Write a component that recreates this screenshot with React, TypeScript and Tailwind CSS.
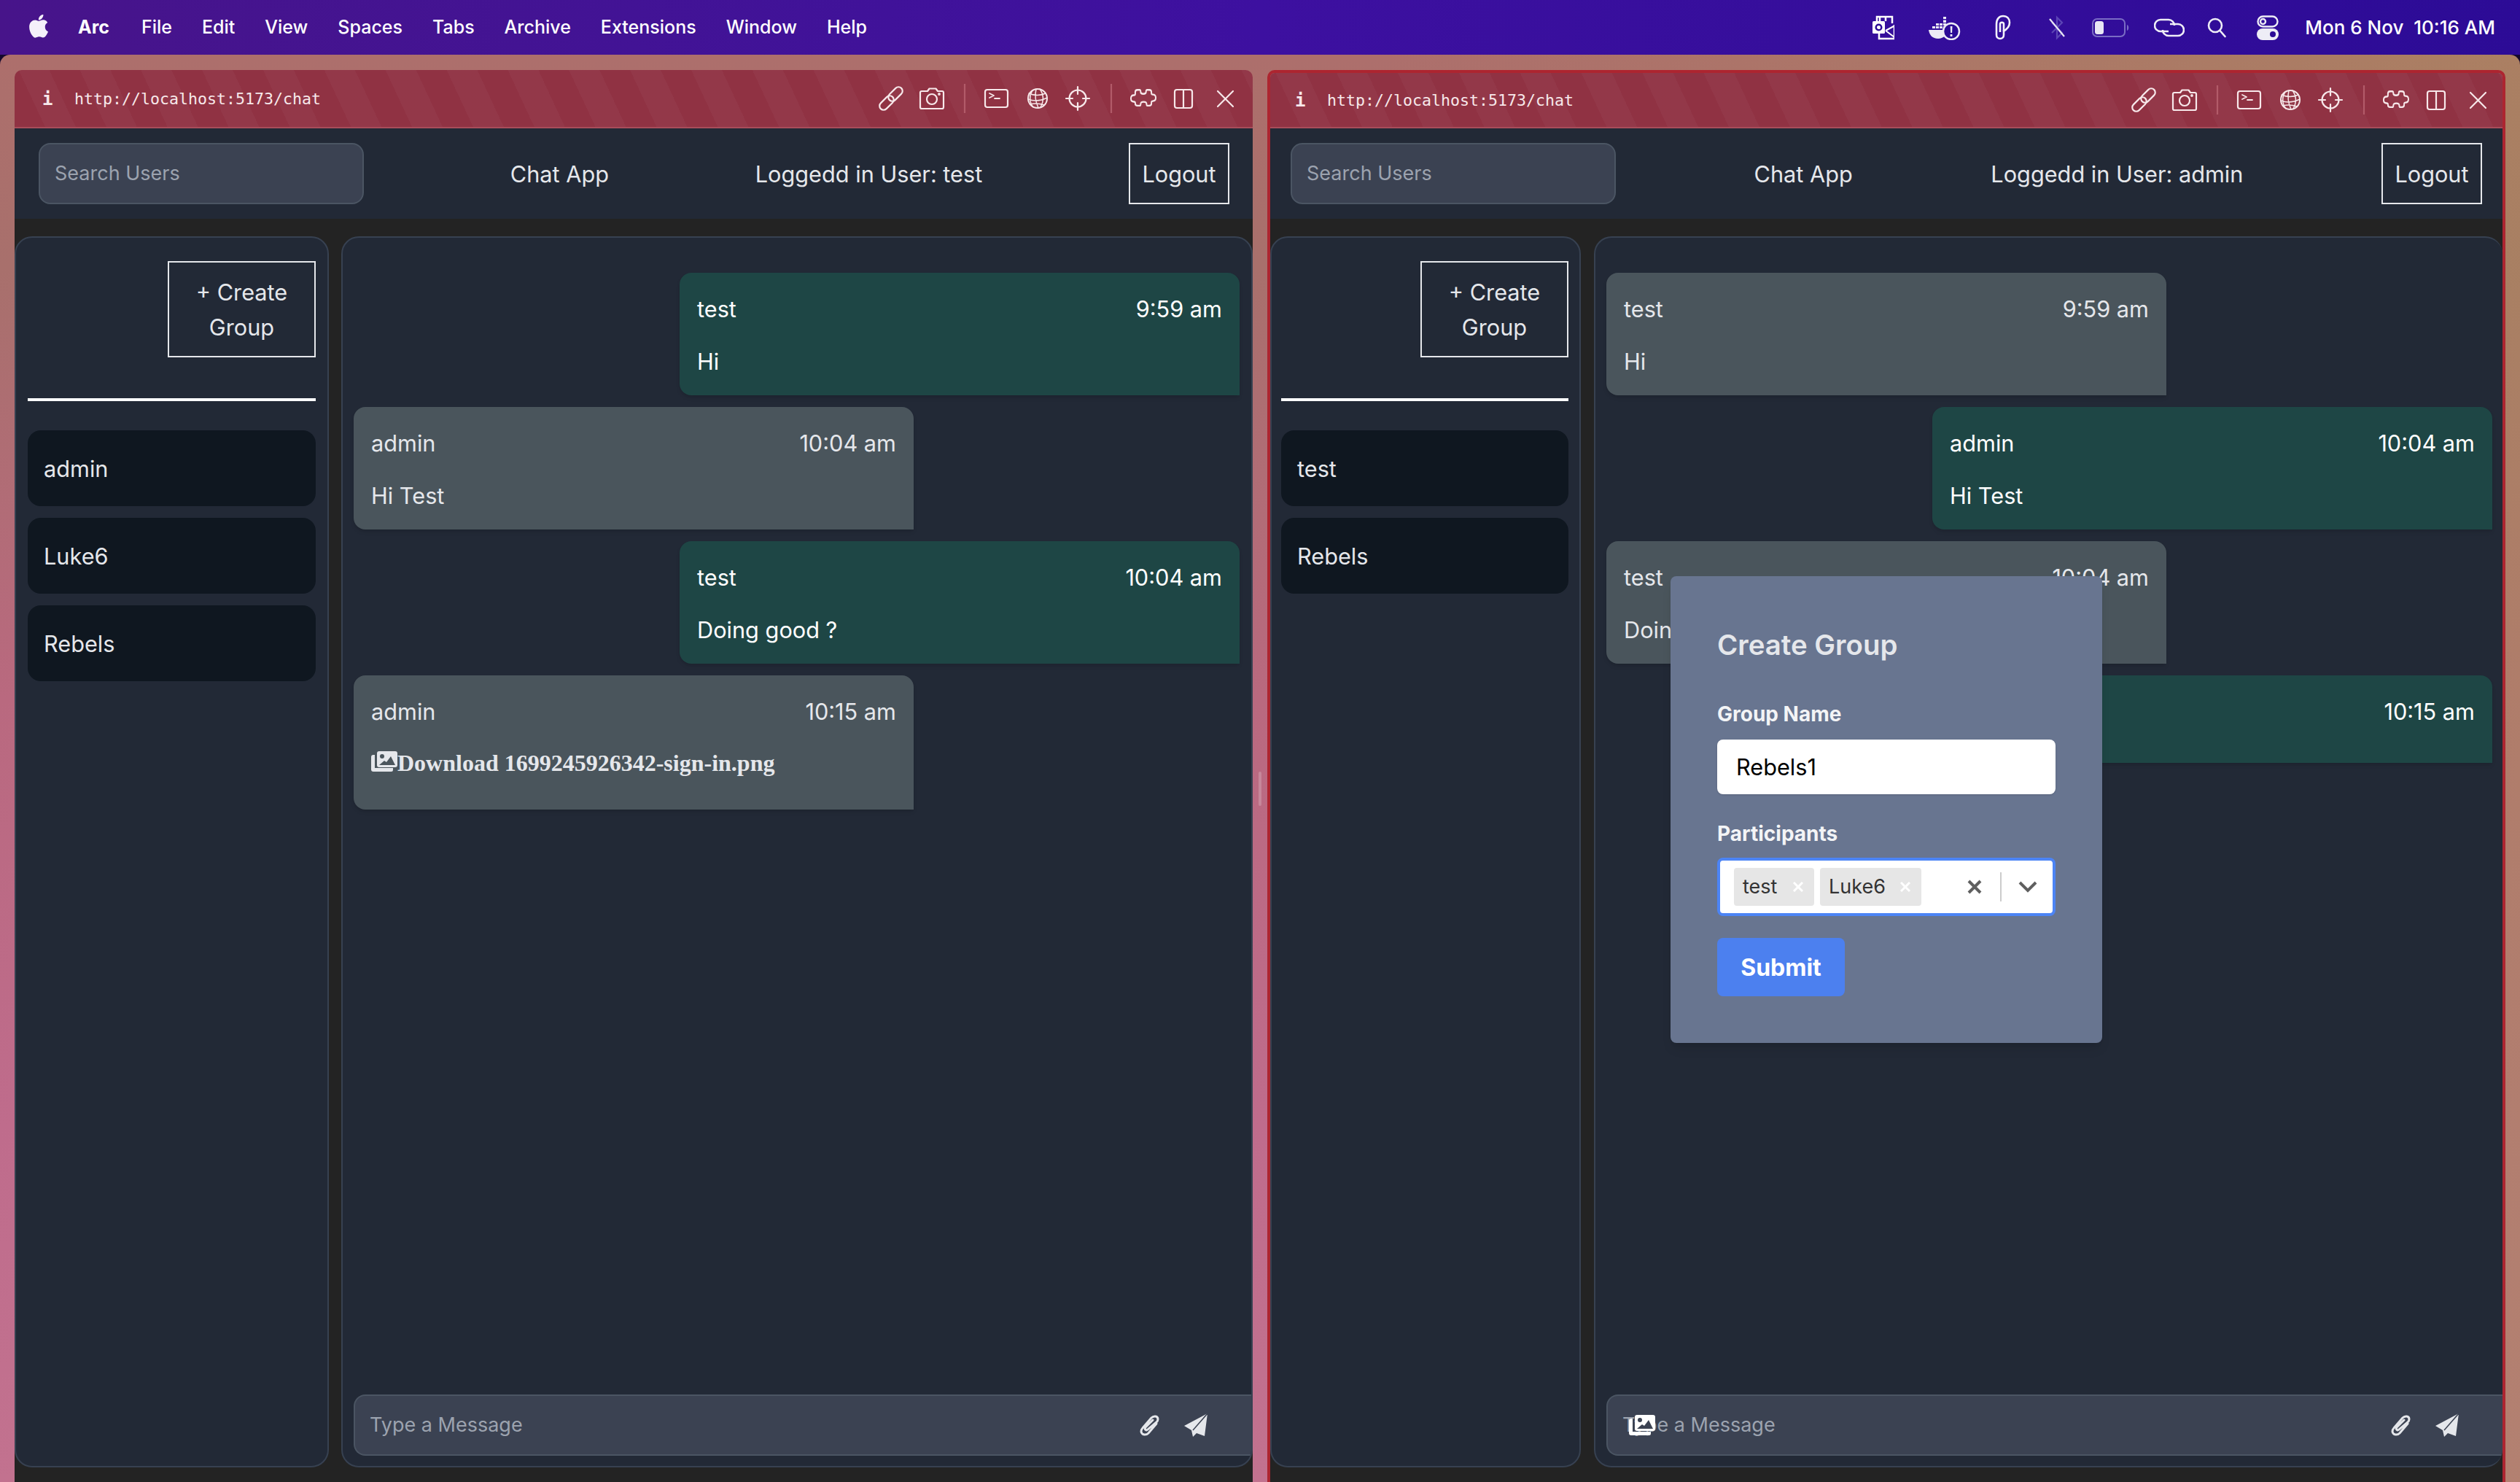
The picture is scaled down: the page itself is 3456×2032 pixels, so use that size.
import { Fragment } from 'react';

type Message = { from: string; time: string; text?: string; mine: boolean; file?: string };

const menuItems = ['File', 'Edit', 'View', 'Spaces', 'Tabs', 'Archive', 'Extensions', 'Window', 'Help'];

const PhotosIcon = ({ className, cut }: { className: string; cut: string }) => (
  <svg viewBox="0 0 36 28" className={className} fill="currentColor">
    <path d="M3 5h2v18h25v2.500a2.500 2.500 0 0 1-2.500 2.500H3a3 3 0 0 1-3-3V8a3 3 0 0 1 3-3z" />
    <rect x="8" y="0" width="28" height="22" rx="3" />
    <circle cx="15" cy="7" r="3" fill={cut} />
    <path d="M11 19l7-6 3 2 6-8 6 12z" fill={cut} />
  </svg>
);

const ToolbarIcons = () => (
  <svg viewBox="0 0 514 40" className="w-[514px] h-[40px] text-[#f7e8ea]" fill="none" stroke="currentColor" strokeWidth="2.200" strokeLinecap="round" strokeLinejoin="round">
    {/* link */}
    <g transform="rotate(-45 28 20)">
      <rect x="8" y="14.500" width="23" height="11" rx="5.500" />
      <rect x="25" y="14.500" width="23" height="11" rx="5.500" />
    </g>
    {/* camera */}
    <path d="M72 10h6l2.500-3.500h9L92 10h6a2 2 0 0 1 2 2v20a2 2 0 0 1-2 2H70a2 2 0 0 1-2-2V12a2 2 0 0 1 2-2z" />
    <circle cx="84" cy="21" r="7" />
    <circle cx="94" cy="14" r="0.800" fill="currentColor" />
    {/* separator */}
    <path d="M129 0v40" stroke="#b25b69" />
    {/* terminal */}
    <rect x="157" y="8" width="31" height="24" rx="3" />
    <path d="M163 13l6 3-6 3M170 20h7" strokeWidth="1.800" />
    {/* globe */}
    <circle cx="229" cy="20" r="13" strokeWidth="2" />
    <path d="M222 9c-5 8-4 17 1 23M232 7c5 7 6 16 1 25M217 13c7 3 16 3 23 0M216 21c8 3 18 2 26-2M219 28c7-2 13-1 19 1M227 7c-2 8-1 17 3 26" strokeWidth="1.500" />
    {/* target */}
    <circle cx="284" cy="20" r="11.500" />
    <path d="M284 4v10M284 26v10M268 20h9M291 20h9" />
    {/* separator */}
    <path d="M330 0v40" stroke="#b25b69" />
    {/* puzzle */}
    <path
      transform="translate(374 20) scale(0.74 0.9) translate(-373 -21)"
      strokeWidth="2.700"
      d="M362 8h4c2 0 2 1.500 2 3 0 4 10 4 10 0 0-1.500 0-3 2-3h4c2.500 0 4 1.500 4 3.500v1.500c0 1.500 1 2 2.500 2 3.500 0 5.500 2 5.500 5s-2 5-5.500 5c-1.500 0-2.500.500-2.500 2v1.500c0 2-1.500 3.500-4 3.500h-3c-2 0-2-1-2-2.500 0-4.500-11-4.500-11 0 0 1.500 0 2.500-2 2.500h-4c-2.500 0-4-1.500-4-3.500V28c0-1.500-1-2-2.500-2-3.500 0-5.500-2-5.500-5s2-5 5.500-5c1.500 0 2.500-.500 2.500-2v-2.500c0-2 1.500-3.500 4-3.500z"
    />
    <rect x="417" y="8" width="24" height="25" rx="3" />
    <path d="M429 8v25" />
    {/* close */}
    <path d="M476 10l21 21M497 10l-21 21" />
  </svg>
);

const StatusIcons = () => (
  <div className="flex items-center text-white">
    <svg viewBox="0 0 30 34" className="w-[30px] h-[34px]" fill="none" stroke="currentColor" strokeWidth="2.500">
      <path d="M6 8V2h21v9M10 2v6M18 2v6M9 24v8h21V13" />
      <rect x="0" y="8" width="17" height="17" rx="1.500" fill="currentColor" stroke="none" />
      <circle cx="8.500" cy="16.500" r="3.800" stroke="#2c0b96" strokeWidth="2.500" />
      <path d="M18 21l11-6M18 21l12 9" strokeWidth="2" />
    </svg>
    <svg viewBox="0 0 44 34" className="ml-[47px] w-[44px] h-[34px] text-[#ecebf5]" fill="currentColor">
      <path d="M10 11h4v3h-4zM15 11h4v3h-4zM20 11h4v3h-4zM5 15h4v3H5zM10 15h4v3h-4zM15 15h4v3h-4zM20 15h4v3h-4zM20 2h4v3h-4zM20 6.500h4V10h-4z" />
      <path d="M0 20h26c-.500 7-6 12-13 12C5 32 1 27 0 20z" />
      <circle cx="31" cy="22" r="11" fill="#2c0b96" stroke="currentColor" strokeWidth="2.500" />
      <path d="M29.700 15h2.800l-.4 9h-2zM29.600 26h2.800v3h-2.800z" />
    </svg>
    <svg viewBox="0 0 24 36" className="ml-[46px] w-[24px] h-[36px]" fill="none" stroke="#f3f2fa" strokeWidth="2.600">
      <path d="M3 13C3 6 7 2 12 2c6 0 9 4 9 9 0 6-5 10-9 12" />
      <path d="M3 13v15c0 3 2 5 5 5s5-2 5-5V13c0-3-5-3-5 0v11" />
    </svg>
    <svg viewBox="0 0 24 34" className="ml-[50px] w-[24px] h-[34px]" fill="none" stroke="#5c46b5" strokeWidth="2.200">
      <path d="M5 10l14 14-7 7V3l7 7-14 14" />
      <path d="M2 5l20 24" stroke="#e8e6f4" />
    </svg>
    <svg viewBox="0 0 52 26" className="ml-[36px] w-[52px] h-[26px]" fill="none">
      <rect x="1" y="1" width="44" height="24" rx="6" stroke="#7a6cc4" strokeWidth="2" />
      <rect x="4" y="4" width="12" height="18" rx="3.500" fill="#e8e6f4" />
      <path d="M48 9c3 1 3 7 0 8z" fill="#7a6cc4" />
    </svg>
    <svg viewBox="0 0 42 26" className="ml-[33px] w-[42px] h-[26px]" fill="none" stroke="#eeedf6" strokeWidth="2.600">
      <path d="M20 18H9a8 8 0 0 1 0-16h11a8 8 0 0 1 8 8" />
      <path d="M22 8h11a8 8 0 0 1 0 16H20a8 8 0 0 1-8-8" />
    </svg>
    <svg viewBox="0 0 26 28" className="ml-[31px] w-[26px] h-[28px]" fill="none" stroke="#eeedf6" strokeWidth="2.600" strokeLinecap="round">
      <circle cx="11" cy="11" r="9" />
      <path d="M17.500 18l7 8" />
    </svg>
    <svg viewBox="0 0 30 34" className="ml-[42px] w-[30px] h-[34px]" fill="none" stroke="#eeedf6" strokeWidth="2.400">
      <rect x="1.500" y="1.500" width="27" height="14" rx="7" />
      <circle cx="8.500" cy="8.500" r="3.500" />
      <rect x="0" y="18" width="30" height="16" rx="8" fill="#eeedf6" stroke="none" />
      <circle cx="22" cy="26" r="4" fill="#2c0b96" stroke="none" />
    </svg>
  </div>
);

const Bubble = ({ m }: { m: Message }) => (
  <div className={`flex ${m.mine ? 'justify-end' : 'justify-start'}`}>
    <div className={`w-[768px] rounded-2xl rounded-br-none px-6 pt-[26px] pb-[22px] shadow-md ${m.mine ? 'bg-[#1e4645] text-white' : 'bg-[#4a555c] text-[#e5e7eb]'}`}>
      <div className="mb-6 flex justify-between leading-[48px]">
        <span>{m.from}</span>
        <span>{m.time}</span>
      </div>
      {m.text && <div className="leading-[48px]">{m.text}</div>}
      {m.file && (
        <div className="-mt-[2px] flex h-[66px] items-start text-[32px] font-['Liberation_Serif',serif] font-bold leading-[48px]">
          <PhotosIcon className="mt-[8px] w-[36px] h-[28px] shrink-0" cut="#4a555c" />
          <span>Download {m.file}</span>
        </div>
      )}
    </div>
  </div>
);

const Pane = ({
  user,
  contacts,
  messages,
  focused,
}: {
  user: string;
  contacts: string[];
  messages: Message[];
  focused: boolean;
}) => (
  <section
    className={`relative flex w-[1698px] shrink-0 flex-col overflow-hidden rounded-t-[10px] ${focused ? 'border-x-4 border-t-4 border-[#ad2530]' : ''}`}
  >
    <div
      className={`flex items-center justify-between border-b-2 border-[#a84c5a] bg-[#903243] bg-[repeating-linear-gradient(65deg,transparent_0,transparent_38px,#ffffff08_38px,#ffffff08_76px)] ${focused ? 'h-[76px] pl-[34px] pr-[6px]' : 'h-[80px] pl-[38px] pr-[10px]'}`}
    >
      <div className="flex items-center pt-[2px] font-['DejaVu_Sans_Mono',monospace] text-[21.600px] text-[#f7e8ea]">
        <span className="w-[44px] text-[24px] font-bold">i</span>
        <span>http://localhost:5173/chat</span>
      </div>
      <ToolbarIcons />
    </div>

    <header
      className={`flex h-[124px] shrink-0 items-center justify-between bg-[#222936] text-[#e5e7eb] ${focused ? 'px-[28px]' : 'pl-[33px] pr-[32px]'}`}
    >
      <div className="flex h-[84px] w-[446px] items-center rounded-2xl border-2 border-[#4b5563] bg-[#3b4252] px-5 text-[27px] text-[#9ca3af]">
        Search Users
      </div>
      <span className="pt-[2px]">Chat App</span>
      <span className="pt-[2px]">Loggedd in User: {user}</span>
      <button className="h-[84px] w-[138px] border-2 border-[#e5e7eb] pt-[2px] text-center">Logout</button>
    </header>

    <div className={`flex min-h-0 flex-1 bg-[#232323] pt-6 pb-5 ${focused ? 'gap-[18px]' : 'gap-[17px]'}`}>
      <aside
        className={`flex shrink-0 flex-col rounded-3xl border-2 border-[#374151] bg-[#222936] pt-8 ${focused ? 'w-[426px] pl-[13px] pr-[15px]' : 'w-[431px] pl-4 pr-4'}`}
      >
        <button className="h-[132px] w-[203px] self-end border-2 border-[#e5e7eb] px-4 pt-[2px] leading-[48px] text-[#e5e7eb]">
          + Create Group
        </button>
        <div className="mt-14 h-[4px] bg-white" />
        <div className="mt-10 flex flex-col gap-4">
          {contacts.map((c) => (
            <div key={c} className="flex h-[104px] items-center rounded-[18px] bg-[#0f1720] px-[22px] pt-[2px] text-[#e5e7eb]">
              {c}
            </div>
          ))}
        </div>
      </aside>

      <main className={`flex min-w-0 flex-1 flex-col overflow-hidden rounded-3xl border-2 border-[#374151] bg-[#222936] ${focused ? 'border-r-0' : ''}`}>
        <div className={`flex flex-1 flex-col gap-4 pl-[15px] pt-12 ${focused ? 'pr-[14px]' : 'pr-4'}`}>
          {messages.map((m) => (
            <Fragment key={m.from + m.time}>
              <Bubble m={m} />
            </Fragment>
          ))}
        </div>
        <div className="relative mb-[14px] ml-[15px] flex h-[84px] shrink-0 items-center justify-between rounded-l-2xl border-y-2 border-l-2 border-[#4b5563] bg-[#3b4252] pl-5 pr-[60px] text-[27px] text-[#9ca3af]">
          <span>Type a Message</span>
          <div className="flex items-center gap-[32px] text-[#e5e7eb]">
            <svg viewBox="0 0 30 32" className="w-[30px] h-[32px]" fill="none" stroke="currentColor" strokeWidth="3" strokeLinecap="round">
              <path d="M24 14L13 27c-3 3-9 3-10-2 0-2 1-4 2-5L17 6c3-3 9-3 9 2 0 2-1 3-2 4L12 22c-2 2-5 0-3-3L19 9" />
            </svg>
            <svg viewBox="0 0 32 32" className="w-[32px] h-[32px]" fill="currentColor">
              <path d="M32 0L0 17l10 6 2 9 5-5 11 4z" />
              <path d="M32 0L12 23" stroke="#3b4252" strokeWidth="1.500" />
            </svg>
          </div>
          {focused && (
            <PhotosIcon className="absolute left-[28px] top-[26px] w-[38px] h-[28px] text-white" cut="#3b4252" />
          )}
        </div>
      </main>
    </div>

    {focused && (
      <div className="absolute left-[549px] top-[690px] h-[640px] w-[592px] rounded-lg bg-[#687590] px-[64px] pt-[66px] shadow-lg">
        <h2 className="text-[38.400px] font-semibold leading-[56px] text-[#e5e7eb]">Create Group</h2>
        <label className="mt-[47px] block text-[28px] font-bold leading-[40px] text-[#f3f4f6]">Group Name</label>
        <div className="mt-[15px] flex h-[75px] items-center rounded-lg bg-white px-[26px] pt-[2px] text-black shadow">Rebels1</div>
        <label className="mt-[34px] block text-[28px] font-bold leading-[40px] text-[#f3f4f6]">Participants</label>
        <div className="mt-[13px] flex h-[80px] items-center rounded-lg border-4 border-[#4c84f5] bg-white pl-[19px] text-[27px] text-[#333333]">
          {[
            { label: 'test', w: 'w-[110px]' },
            { label: 'Luke6', w: 'w-[139px]' },
          ].map((chip) => (
            <div key={chip.label} className={`mr-2 flex h-[52px] ${chip.w} items-center justify-between rounded bg-[#e6e6e6] pl-[12px] pr-[15px]`}>
              <span>{chip.label}</span>
              <svg viewBox="0 0 14 14" className="w-[14px] h-[14px]" fill="none" stroke="#ffffff" strokeWidth="3">
                <path d="M1 1l12 12M13 1L1 13" />
              </svg>
            </div>
          ))}
          <div className="ml-auto flex items-center">
            <svg viewBox="0 0 20 20" className="w-[20px] h-[20px]" fill="none" stroke="#5f5f5f" strokeWidth="4">
              <path d="M2 2l16 16M18 2L2 18" />
            </svg>
            <div className="ml-[25px] h-[40px] w-[2px] bg-[#cccccc]" />
            <svg viewBox="0 0 26 16" className="ml-[23px] mr-[21px] w-[26px] h-[16px]" fill="none" stroke="#5f5f5f" strokeWidth="4">
              <path d="M2 2l11 11L24 2" />
            </svg>
          </div>
        </div>
        <button className="mt-[30px] h-[80px] w-[175px] rounded-lg bg-[#4c80ef] pt-[2px] text-[32px] font-bold text-white">Submit</button>
      </div>
    )}
  </section>
);

export default function App() {
  const leftMessages: Message[] = [
    { from: 'test', time: '9:59 am', text: 'Hi', mine: true },
    { from: 'admin', time: '10:04 am', text: 'Hi Test', mine: false },
    { from: 'test', time: '10:04 am', text: 'Doing good ?', mine: true },
    { from: 'admin', time: '10:15 am', file: '1699245926342-sign-in.png', mine: false },
  ];
  const rightMessages: Message[] = [
    { from: 'test', time: '9:59 am', text: 'Hi', mine: false },
    { from: 'admin', time: '10:04 am', text: 'Hi Test', mine: true },
    { from: 'test', time: '10:04 am', text: 'Doing good ?', mine: false },
    { from: 'admin', time: '10:15 am', mine: true },
  ];

  return (
    <div className="flex h-[2032px] w-[3456px] flex-col overflow-hidden bg-[#14082e] font-['Inter',sans-serif] text-[30.700px]">
      <nav className="flex h-[75px] shrink-0 items-center justify-between bg-gradient-to-r from-[#47148a] via-[#3d10a0] to-[#2c0b96] pl-[40px] pr-[34px] text-[25px] font-medium text-white">
        <div className="flex items-center">
          <svg viewBox="0 0 814 1000" className="mb-1 w-[26px] h-[32px]" fill="#f5f0fa">
            <path d="M788 341c-6 4-106 61-106 187 0 146 128 198 132 199-1 3-20 71-68 140-42 61-86 122-154 122s-85-39-163-39c-76 0-103 41-165 41s-105-57-155-127C51 782 4 654 4 532c0-196 127-300 253-300 67 0 122 44 164 44 40 0 103-47 179-47 29 0 133 3 188 112zM554 158c31-37 54-89 54-141 0-7-1-14-2-20-51 2-112 34-148 76-29 32-55 84-55 137 0 8 1 16 2 19 3 1 9 1 14 1 46 0 103-31 135-72z" />
          </svg>
          <span className="ml-[41px] font-bold">Arc</span>
          <div className="ml-[44px] flex gap-[41px]">
            {menuItems.map((item) => (
              <span key={item}>{item}</span>
            ))}
          </div>
        </div>
        <div className="flex items-center">
          <StatusIcons />
          <span className="ml-[36px] whitespace-pre text-[26px]">Mon 6 Nov  10:16 AM</span>
        </div>
      </nav>

      <div className="flex min-h-0 flex-1 rounded-t-[14px] bg-[linear-gradient(to_right,transparent_55%,#a98a5c99_100%),linear-gradient(to_bottom,#ad6f6c_0%,#a8706c_15%,#b9697f_45%,#bf6c8c_75%,#c2728f_100%)] pl-[20px] pt-[21px]">
        <Pane user="test" contacts={['admin', 'Luke6', 'Rebels']} messages={leftMessages} focused={false} />
        <div className="flex w-[20px] shrink-0 items-center justify-center">
          <div className="mt-[34px] h-[47px] w-[4px] rounded bg-white/20" />
        </div>
        <Pane user="admin" contacts={['test', 'Rebels']} messages={rightMessages} focused />
      </div>
    </div>
  );
}
